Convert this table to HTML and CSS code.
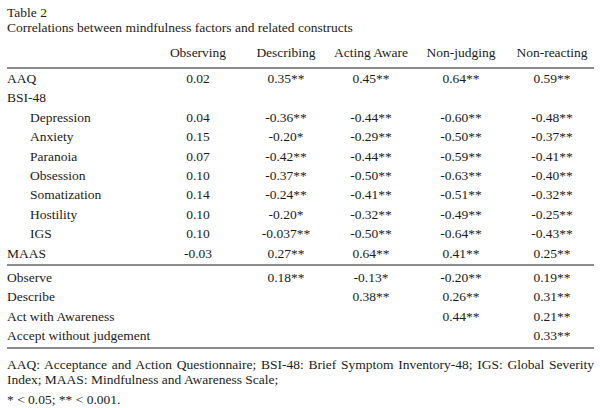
FILE: index.html
```html
<!DOCTYPE html>
<html>
<head>
<meta charset="utf-8">
<link rel="stylesheet" href="styles.css">
</head>
<body>
<div class="page">
  <div class="caption">
    <div>Table 2</div>
    <div>Correlations between mindfulness factors and related constructs</div>
  </div>
  <table class="tbl">
    <colgroup>
      <col class="c-label"><col class="c-obs"><col class="c-desc"><col class="c-act"><col class="c-nj"><col class="c-nr">
    </colgroup>
    <thead>
      <tr>
        <th></th><th>Observing</th><th>Describing</th><th>Acting Aware</th><th>Non-judging</th><th>Non-reacting</th>
      </tr>
    </thead>
    <tbody class="grp">
      <tr><td class="lbl">AAQ</td><td>0.02</td><td>0.35**</td><td>0.45**</td><td>0.64**</td><td>0.59**</td></tr>
      <tr><td class="lbl">BSI-48</td><td></td><td></td><td></td><td></td><td></td></tr>
      <tr><td class="lbl sub">Depression</td><td>0.04</td><td>-0.36**</td><td>-0.44**</td><td>-0.60**</td><td>-0.48**</td></tr>
      <tr><td class="lbl sub">Anxiety</td><td>0.15</td><td>-0.20*</td><td>-0.29**</td><td>-0.50**</td><td>-0.37**</td></tr>
      <tr><td class="lbl sub">Paranoia</td><td>0.07</td><td>-0.42**</td><td>-0.44**</td><td>-0.59**</td><td>-0.41**</td></tr>
      <tr><td class="lbl sub">Obsession</td><td>0.10</td><td>-0.37**</td><td>-0.50**</td><td>-0.63**</td><td>-0.40**</td></tr>
      <tr><td class="lbl sub">Somatization</td><td>0.14</td><td>-0.24**</td><td>-0.41**</td><td>-0.51**</td><td>-0.32**</td></tr>
      <tr><td class="lbl sub">Hostility</td><td>0.10</td><td>-0.20*</td><td>-0.32**</td><td>-0.49**</td><td>-0.25**</td></tr>
      <tr><td class="lbl sub">IGS</td><td>0.10</td><td>-0.037**</td><td>-0.50**</td><td>-0.64**</td><td>-0.43**</td></tr>
      <tr><td class="lbl">MAAS</td><td>-0.03</td><td>0.27**</td><td>0.64**</td><td>0.41**</td><td>0.25**</td></tr>
    </tbody>
    <tbody class="grp">
      <tr><td class="lbl">Observe</td><td></td><td>0.18**</td><td>-0.13*</td><td>-0.20**</td><td>0.19**</td></tr>
      <tr><td class="lbl">Describe</td><td></td><td></td><td>0.38**</td><td>0.26**</td><td>0.31**</td></tr>
      <tr><td class="lbl">Act with Awareness</td><td></td><td></td><td></td><td>0.44**</td><td>0.21**</td></tr>
      <tr><td class="lbl">Accept without judgement</td><td></td><td></td><td></td><td></td><td>0.33**</td></tr>
    </tbody>
  </table>
  <div class="notes">
    <p class="abbr">AAQ: Acceptance and Action Questionnaire; BSI-48: Brief Symptom Inventory-48; IGS: Global Severity Index; MAAS: Mindfulness and Awareness Scale;</p>
    <p class="sig">* &lt; 0.05; ** &lt; 0.001.</p>
  </div>
</div>
</body>
</html>
```
FILE: styles.css
```css
html, body {
  margin: 0;
  padding: 0;
  background: #fff;
}
body {
  font-family: "Liberation Serif", "Times New Roman", serif;
  font-size: 13.5px;
  color: #1c1c1c;
}
.page {
  width: 587px;
  padding: 5px 0 0 7px;
}
.caption {
  line-height: 15px;
}
.tbl {
  margin-top: 8px;
  width: 587px;
  table-layout: fixed;
  border-collapse: collapse;
}
.c-label { width: 147px; }
.c-obs { width: 88px; }
.c-desc { width: 88px; }
.c-act { width: 82px; }
.c-nj { width: 98px; }
.c-nr { width: 84px; }
.tbl th {
  font-weight: normal;
  text-align: center;
  line-height: 20px;
  padding: 0 0 4px 0;
  border-bottom: 2px solid #8c8c8c;
  white-space: nowrap;
}
.tbl td {
  padding: 0;
  line-height: 19.4px;
  text-align: center;
  white-space: nowrap;
}
.tbl td.lbl {
  text-align: left;
}
.tbl td.sub {
  padding-left: 23px;
}
.grp + .grp tr:first-child td {
  padding-top: 2px;
}
.grp tr:last-child td {
  border-bottom: 2px solid #8c8c8c;
  padding-bottom: 1px;
}
.notes {
  padding-top: 8px;
}
.notes p {
  margin: 0;
}
.abbr {
  text-align: justify;
  line-height: 15px;
}
.sig {
  margin-top: 5px !important;
  line-height: 15px;
}
```
